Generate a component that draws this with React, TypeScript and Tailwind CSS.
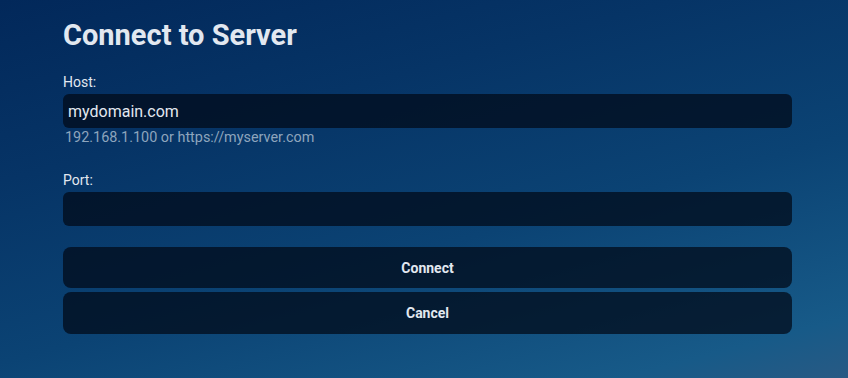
import { useState } from "react";

const font = { fontFamily: "Roboto, 'Liberation Sans', sans-serif" };

export default function App() {
  const [host, setHost] = useState("mydomain.com");
  const [port, setPort] = useState("");

  return (
    <div
      className="min-h-[378px] w-full bg-[linear-gradient(165deg,#02285a_0%,#063466_30%,#0b4374_60%,#175a88_90%,#285a84_100%)] text-slate-200"
      style={font}
    >
      <div className="ml-[63px] w-[729px] pt-[18px]">
        <h1 className="text-[29px] leading-[35px] font-bold text-slate-200">
          Connect to Server
        </h1>

        <div className="mt-[19px]">
          <label className="block text-sm leading-5 text-slate-200">Host:</label>
          <input
            value={host}
            onChange={(e) => setHost(e.target.value)}
            className="mt-[2px] block h-[34px] w-full rounded-md bg-[#010b1a]/75 px-[5px] text-base text-slate-200 outline-none"
          />
          <p className="pl-[2px] text-[14.4px] leading-5 text-[#8ea5bd]">
            192.168.1.100 or https://myserver.com
          </p>
        </div>

        <div className="mt-[22px]">
          <label className="block text-sm leading-5 text-slate-200">Port:</label>
          <input
            value={port}
            onChange={(e) => setPort(e.target.value)}
            className="mt-[2px] block h-[34px] w-full rounded-md bg-[#010b1a]/75 px-[5px] text-base text-slate-200 outline-none"
          />
        </div>

        <div className="mt-[21px] flex flex-col gap-1">
          <button
            type="button"
            className="h-[41px] w-full rounded-lg bg-[#010b1a]/75 text-sm font-bold text-slate-200"
          >
            Connect
          </button>
          <button
            type="button"
            className="h-[42px] w-full rounded-lg bg-[#010b1a]/75 text-sm font-bold text-slate-200"
          >
            Cancel
          </button>
        </div>
      </div>
    </div>
  );
}
